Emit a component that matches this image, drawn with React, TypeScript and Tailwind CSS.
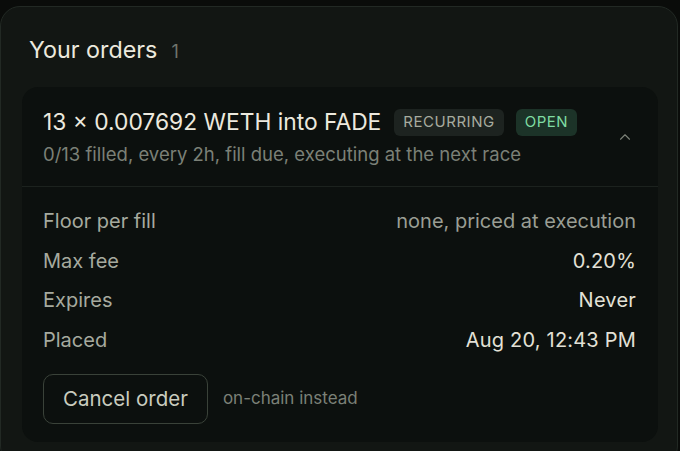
import { ChevronUp } from "lucide-react";

const rows = [
  { label: "Floor per fill", value: "none, priced at execution", muted: true },
  { label: "Max fee", value: "0.20%" },
  { label: "Expires", value: "Never" },
  { label: "Placed", value: "Aug 20, 12:43 PM" },
];

function OrderCard() {
  return (
    <div className="rounded-[16px] bg-[#0c100e]">
      <div className="flex items-center justify-between pl-[21px] pr-[24px] pt-[20px] pb-[19px] border-b border-[#1c221e]">
        <div>
          <div className="flex items-center">
            <span className="text-[22.8px] leading-[30px] text-[#ece9de]">
              13 × 0.007692 WETH into FADE
            </span>
            <span className="ml-[13px] rounded-[6px] bg-[#1d2320] px-[9px] h-[27px] flex items-center text-[15px] tracking-[0.035em] text-[#a7ab9f]">
              RECURRING
            </span>
            <span className="ml-[12px] rounded-[6px] bg-[#1c3328] px-[9px] h-[27px] flex items-center text-[15px] tracking-[0.035em] text-[#7fdca2]">
              OPEN
            </span>
          </div>
          <div className="mt-[4px] text-[18.5px] leading-[26px] text-[#7b8077]">
            0/13 filled, every 2h, fill due, executing at the next race
          </div>
        </div>
        <ChevronUp className="h-[18px] w-[18px] text-[#7b8077]" strokeWidth={1.5} />
      </div>

      <div className="pl-[21px] pr-[22px] pt-[20px] pb-[18px]">
        <div className="flex flex-col gap-[11.5px]">
          {rows.map((r) => (
            <div key={r.label} className="flex items-center justify-between text-[20px] leading-[28px]">
              <span className="text-[#a6aa9f]">{r.label}</span>
              <span className={r.muted ? "text-[#9a9e94]" : "text-[#e3e1d6] tracking-[0.01em]"}>{r.value}</span>
            </div>
          ))}
        </div>
        <div className="mt-[20.5px] flex items-center gap-[15px]">
          <button className="h-[50px] rounded-[10px] border border-[#3a4239] px-[19px] text-[20.5px] text-[#c9ccbf]">
            Cancel order
          </button>
          <span className="text-[17px] text-[#7b8077]">on-chain instead</span>
        </div>
      </div>
    </div>
  );
}

export default function App() {
  return (
    <div
      className="min-h-screen overflow-hidden bg-[#0a0c0a] pt-[6px] pr-[2px]"
      style={{ fontFamily: "Inter, 'Noto Sans', sans-serif" }}
    >
      <div className="min-h-[460px] rounded-[20px] border border-[#222924] bg-[#121613] pl-[21px] pr-[19px] pt-[28px]">
        <div className="flex items-baseline gap-[14px] pl-[7px]">
          <h2 className="text-[23.3px] leading-[30px] text-[#ece9de]">Your orders</h2>
          <span className="text-[18px] text-[#6f746c]">1</span>
        </div>
        <div className="mt-[22px]">
          <OrderCard />
        </div>
      </div>
    </div>
  );
}
